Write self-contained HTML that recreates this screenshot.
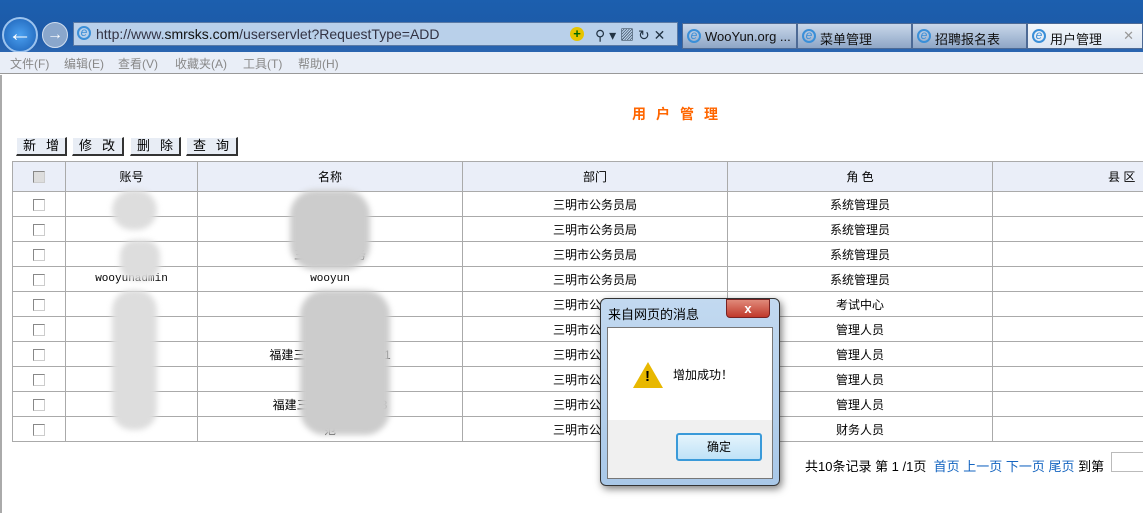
<!DOCTYPE html>
<html><head><meta charset="utf-8"><style>
*{margin:0;padding:0;box-sizing:border-box}
body{width:1143px;height:513px;overflow:hidden;background:#fff;font-family:"Liberation Sans","Noto Sans CJK SC",sans-serif;font-size:12px;position:relative}
.abs{position:absolute}
.top{left:0;top:0;width:1143px;height:52px;background:linear-gradient(#1c5fae,#1d5aa8 60%,#2a65b0)}
.url{left:73px;top:22px;width:605px;height:24px;background:#b9d0ea;border:1px solid #5a7aa5;font-size:14px;color:#334;padding:3px 0 0 22px}
.tab{top:23px;height:26px;background:linear-gradient(#c9d7ea,#8ea6c6);border:1px solid #4d6a95;font-size:13px;color:#111;padding:5px 0 0 22px;white-space:nowrap}
.ie{position:absolute;left:4px;top:5px;width:14px;height:14px;border-radius:50%;border:2px solid #3a8fd8;color:#3a8fd8;font-size:12px;line-height:9px;text-align:center;font-style:italic}
.menu{left:0;top:52px;width:1143px;height:22px;background:#e9eef7;border-bottom:1px solid #999;font-size:12px;color:#888}
.menu span{position:absolute;top:3px}
.btn{top:137px;height:19px;background:#e8edf5;border-right:2px solid #333;border-bottom:2px solid #333;border-left:1px solid #fff;border-top:1px solid #fff;font-size:13px;letter-spacing:10px;padding:0 0 0 6px;line-height:16px;white-space:nowrap;overflow:hidden}
table{position:absolute;left:12px;top:161px;border-collapse:collapse;width:1160px}
td{border:1px solid #aaa;height:25px;text-align:center;font-size:12px}
tr.h td{height:30px;background:#eaeef8}
.cb{display:inline-block;width:12px;height:12px;border:1px solid #888;border-right-color:#ccc;border-bottom-color:#ccc;vertical-align:middle}
.mono{font-family:"Liberation Mono",monospace;font-size:11px}
.blur{background:#ddd;filter:blur(3px)}
a{color:#1565c0;text-decoration:none}
</style></head><body>
<div class="abs top"></div>
<div class="abs" style="left:2px;top:17px;width:36px;height:36px;border-radius:50%;background:radial-gradient(#4ba0f0,#1b5fb4);border:2px solid #9cc3ee;color:#fff;font-size:24px;text-align:center;line-height:30px;font-weight:bold">←</div>
<div class="abs" style="left:42px;top:22px;width:26px;height:26px;border-radius:50%;background:#8aa7cc;border:1px solid #d0def0;color:#fff;font-size:16px;text-align:center;line-height:23px">→</div>
<div class="abs url"><span class="ie" style="top:3px;left:3px">e</span>http://www.<span style="color:#111">smrsks.com</span>/userservlet?RequestType=ADD</div>
<div class="abs" style="left:570px;top:27px;width:14px;height:14px;border-radius:50%;background:#e6c400;color:#060;font-weight:bold;font-size:13px;line-height:14px;text-align:center">+</div>
<div class="abs" style="left:595px;top:25px;font-size:14px;color:#234">⚲ ▾ ▨ ↻ ✕</div>
<div class="abs tab" style="left:682px;width:115px"><span class="ie">e</span>WooYun.org ...</div>
<div class="abs tab" style="left:797px;width:115px"><span class="ie">e</span>菜单管理</div>
<div class="abs tab" style="left:912px;width:115px"><span class="ie">e</span>招聘报名表</div>
<div class="abs tab" style="left:1027px;width:116px;background:linear-gradient(#f4f7fb,#dbe5f2)"><span class="ie">e</span>用户管理<span style="position:absolute;right:8px;top:4px;color:#999">✕</span></div>
<div class="abs menu"><span style="left:10px">文件(F)</span><span style="left:64px">编辑(E)</span><span style="left:118px">查看(V)</span><span style="left:175px">收藏夹(A)</span><span style="left:243px">工具(T)</span><span style="left:298px">帮助(H)</span></div>
<div class="abs" style="left:0;top:75px;width:2px;height:438px;background:#aaa"></div>
<div class="abs" style="left:632px;top:104px;color:#ff6600;font-weight:bold;font-size:14px;letter-spacing:10px">用户管理</div>
<div class="abs btn" style="left:16px;width:51px">新增</div>
<div class="abs btn" style="left:72px;width:52px">修改</div>
<div class="abs btn" style="left:130px;width:51px">删除</div>
<div class="abs btn" style="left:186px;width:52px">查询</div>
<table>
<colgroup><col style="width:53px"><col style="width:132px"><col style="width:265px"><col style="width:265px"><col style="width:265px"><col></colgroup>
<tr class="h"><td><span class="cb" style="background:#ddd"></span></td><td>账号</td><td>名称</td><td>部门</td><td>角 色</td><td style="text-align:left;padding-left:115px">县 区</td></tr>
<tr><td><span class="cb"></span></td><td></td><td></td><td>三明市公务员局</td><td>系统管理员</td><td></td></tr>
<tr><td><span class="cb"></span></td><td></td><td></td><td>三明市公务员局</td><td>系统管理员</td><td></td></tr>
<tr><td><span class="cb"></span></td><td></td><td>三　　　　务　　</td><td>三明市公务员局</td><td>系统管理员</td><td></td></tr>
<tr><td><span class="cb"></span></td><td class="mono">wooyunadmin</td><td class="mono">wooyun</td><td>三明市公务员局</td><td>系统管理员</td><td></td></tr>
<tr><td><span class="cb"></span></td><td></td><td></td><td>三明市公务员局</td><td>考试中心</td><td></td></tr>
<tr><td><span class="cb"></span></td><td></td><td>流　　科</td><td>三明市公务员局</td><td>管理人员</td><td></td></tr>
<tr><td><span class="cb"></span></td><td></td><td>福建三　　　　　司01</td><td>三明市公务员局</td><td>管理人员</td><td></td></tr>
<tr><td><span class="cb"></span></td><td></td><td>福建　　　　　</td><td>三明市公务员局</td><td>管理人员</td><td></td></tr>
<tr><td><span class="cb"></span></td><td></td><td>福建三　　　限　　3</td><td>三明市公务员局</td><td>管理人员</td><td></td></tr>
<tr><td><span class="cb"></span></td><td></td><td>范　　</td><td>三明市公务员局</td><td>财务人员</td><td></td></tr>
</table>
<div class="abs blur" style="left:112px;top:190px;width:45px;height:40px;border-radius:20px"></div>
<div class="abs blur" style="left:120px;top:240px;width:40px;height:40px;border-radius:15px"></div>
<div class="abs blur" style="left:112px;top:290px;width:45px;height:140px;border-radius:20px"></div>
<div class="abs blur" style="left:290px;top:190px;width:80px;height:80px;border-radius:25px;background:#ccc"></div>
<div class="abs blur" style="left:300px;top:290px;width:90px;height:145px;border-radius:25px;background:#ccc"></div>
<div class="abs" style="left:805px;top:456px;font-size:13px;white-space:nowrap">共10条记录 第 1 /1页 &nbsp;<a>首页</a> <a>上一页</a> <a>下一页</a> <a>尾页</a> 到第</div>
<div class="abs" style="left:1111px;top:452px;width:40px;height:20px;border:1px solid #bbb"></div>
<div class="abs" style="left:600px;top:298px;width:180px;height:188px;border-radius:6px;background:linear-gradient(#c2d9f0,#a9c8e8);border:1px solid #333;box-shadow:2px 3px 8px rgba(0,0,0,.5)"></div>
<div class="abs" style="left:608px;top:304px;font-size:13px;color:#000">来自网页的消息</div>
<div class="abs" style="left:726px;top:299px;width:44px;height:19px;background:linear-gradient(#e08a7a,#c0392b);border:1px solid #722;border-radius:0 0 4px 4px;color:#fff;font-weight:bold;text-align:center;font-size:13px;line-height:17px">x</div>
<div class="abs" style="left:607px;top:327px;width:166px;height:152px;background:#f0f0f0;border:1px solid #777"></div>
<div class="abs" style="left:608px;top:328px;width:164px;height:92px;background:#fff"></div>
<div class="abs" style="left:633px;top:362px;width:0;height:0;border-left:15px solid transparent;border-right:15px solid transparent;border-bottom:26px solid #e8b800"></div>
<div class="abs" style="left:645px;top:368px;font-weight:bold;font-size:15px">!</div>
<div class="abs" style="left:673px;top:366px;font-size:12px">增加成功！</div>
<div class="abs" style="left:676px;top:433px;width:86px;height:28px;border:2px solid #3a9ad9;border-radius:3px;background:linear-gradient(#e5f4fc,#bfe2f7);text-align:center;line-height:24px;font-size:12px">确定</div>
</body></html>
